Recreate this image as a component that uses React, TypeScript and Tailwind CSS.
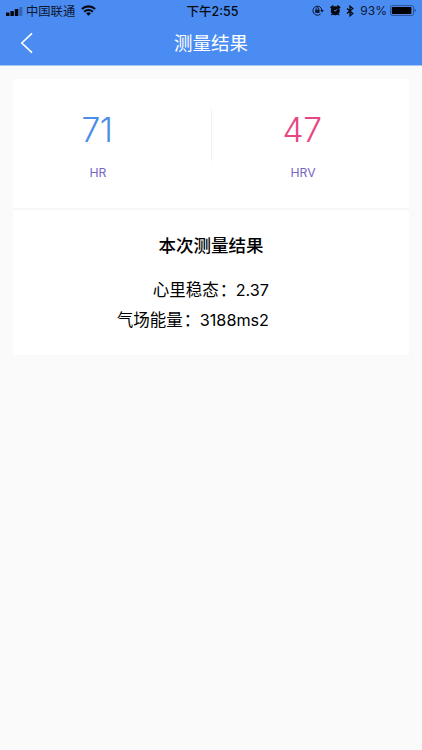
interface Reading {
  label: string;
  value: number;
  color: string;
}

const results = [
  { name: "心里稳态", value: "2.37" },
  { name: "气场能量", value: "3188ms2" },
];

function SignalIcon() {
  return (
    <svg width="17" height="9" viewBox="0 0 17 9" fill="#05090f">
      <rect x="0" y="5.4" width="3.5" height="3.6" rx="0.5" />
      <rect x="4.4" y="4" width="3.5" height="5" rx="0.5" />
      <rect x="8.8" y="2" width="3.5" height="7" rx="0.5" />
      <rect x="13.2" y="0" width="3.2" height="9" rx="0.5" opacity="0.3" />
    </svg>
  );
}

function WifiIcon() {
  return (
    <svg width="15" height="11" viewBox="0 0 15 11" fill="none" stroke="#05090f" strokeWidth="2.1">
      <path d="M0.9 4.1a9.4 9.4 0 0 1 13.2 0" />
      <path d="M3.2 6.8a6.1 6.1 0 0 1 8.6 0" />
      <path d="M7.5 10.8L5.1 8.5a3.4 3.4 0 0 1 4.8 0z" fill="#05090f" stroke="none" />
    </svg>
  );
}

function RotationLockIcon() {
  return (
    <svg width="12" height="11" viewBox="0 0 12 11" fill="none" stroke="#0b1730" strokeWidth="1">
      <path d="M8.6 8.9A4.5 4.5 0 1 1 9.9 5.2" />
      <path d="M8.2 5h3.7L10 7.4z" fill="#0b1730" stroke="none" />
      <rect x="3.2" y="4.7" width="4.4" height="3.2" fill="#0b1730" stroke="none" />
      <path d="M4.1 5V3.9a1.3 1.3 0 0 1 2.6 0V5" strokeWidth="0.9" />
    </svg>
  );
}

function AlarmIcon() {
  return (
    <svg width="11" height="11" viewBox="0 0 11 11" fill="none">
      <circle cx="5.3" cy="5.8" r="4.5" fill="#05090f" />
      <path d="M1.2 2.5L2.7 1.2M9.4 2.5L7.9 1.2" stroke="#05090f" strokeWidth="1.9" strokeLinecap="round" />
      <path d="M2.3 9l-0.8 1.3M8.3 9l0.8 1.3" stroke="#05090f" strokeWidth="1.2" />
      <path d="M5 6.1l2.3-1.9M5.2 6.1L4 5.1" stroke="#4b8cf2" strokeWidth="0.9" />
    </svg>
  );
}

function BluetoothIcon() {
  return (
    <svg width="8" height="12" viewBox="0 0 8 12" fill="none" stroke="#05090f" strokeWidth="1.3">
      <path d="M1 3.4l5.8 5L4 10.8V1.2l2.8 2.4L1 8.6" />
    </svg>
  );
}

function BatteryIcon() {
  return (
    <svg width="27" height="11" viewBox="0 0 27 11">
      <rect x="0.4" y="0.6" width="23.2" height="9.8" rx="1.8" fill="none" stroke="#0b1730" strokeWidth="0.8" opacity="0.6" />
      <rect x="1.8" y="2" width="19.6" height="7" rx="0.7" fill="#000" />
      <path d="M24.6 3.7c1.7 0.5 1.7 3 0 3.5z" fill="#0b1730" opacity="0.55" />
    </svg>
  );
}

function StatusBar() {
  return (
    <div className="grid h-[21px] grid-cols-[1fr_auto_1fr] items-center pl-1.5 pr-[5px] leading-none text-[#0b1730]">
      <div className="flex items-center">
        <span className="pt-0.5">
          <SignalIcon />
        </span>
        <span className="ml-[3px] pt-[3px] text-[12.3px]">中国联通</span>
        <span className="ml-[6px]">
          <WifiIcon />
        </span>
      </div>
      <span className="pl-0.5 pt-[3px] text-[12.5px] font-medium text-[#05090f]">下午2:55</span>
      <div className="flex items-center justify-end">
        <RotationLockIcon />
        <span className="ml-[6px]">
          <AlarmIcon />
        </span>
        <span className="ml-[5px]">
          <BluetoothIcon />
        </span>
        <span className="ml-[6px] mr-[3px] pt-px text-[12px]">93%</span>
        <BatteryIcon />
      </div>
    </div>
  );
}

function NavBar() {
  return (
    <div className="grid h-11 grid-cols-[1fr_auto_1fr] items-center text-white">
      <button aria-label="返回" className="ml-5 w-3">
        <svg width="13" height="22" viewBox="0 0 13 22" fill="none" stroke="currentColor" strokeWidth="1.6">
          <path d="M12 1.3L1.8 11 12 20.7" />
        </svg>
      </button>
      <h1 className="text-[18.5px] leading-none">测量结果</h1>
    </div>
  );
}

function ReadingValue({ label, value, color }: Reading) {
  return (
    <div className="flex flex-col items-center">
      <span className={`mt-[31px] pr-0.5 text-[33.5px] font-[350] leading-[40px] tracking-[-0.5px] ${color}`}>
        {value}
      </span>
      <span className="mt-[15px] text-[12.2px] leading-4 text-[#7767c4]">{label}</span>
    </div>
  );
}

export default function App() {
  return (
    <div className="min-h-[750px] bg-[#fafafa] font-['Inter','Noto_Sans_CJK_SC',sans-serif]">
      <header className="h-[66px] border-b border-[#a5c5f7] bg-[#4b8cf2]">
        <StatusBar />
        <NavBar />
      </header>

      <main className="mx-[13px] mt-[13px] h-[276px] bg-white">
        <section className="flex h-[131px] border-b-2 border-[#f6f6f6]">
          <div className="w-[198px] pr-7">
            <ReadingValue label="HR" value={71} color="text-[#4a8ce6]" />
          </div>
          <div className="mt-[30px] h-[52px] w-px bg-[#efeff4]" />
          <div className="w-[197px] pr-[15px]">
            <ReadingValue label="HRV" value={47} color="text-[#e64683]" />
          </div>
        </section>

        <section className="pt-6 text-black">
          <h2 className="text-center text-[17.5px] font-medium leading-6">本次测量结果</h2>
          <ul className="mt-[17px] pr-[140px] text-[16.5px] leading-[30px]">
            {results.map((item) => (
              <li key={item.name} className="flex justify-end">
                <span>{item.name}</span>
                <span className="w-[17px] pl-px">：</span>
                <span className="text-[16.2px]">{item.value}</span>
              </li>
            ))}
          </ul>
        </section>
      </main>
    </div>
  );
}
